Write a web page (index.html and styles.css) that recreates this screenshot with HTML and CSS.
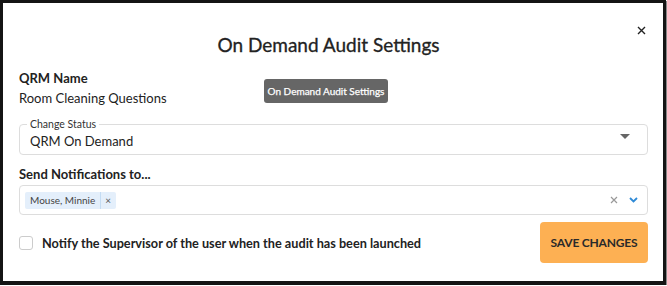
FILE: index.html
```html
<!DOCTYPE html>
<html lang="en">
<head>
  <meta charset="UTF-8" />
  <title>On Demand Audit Settings</title>
  <link rel="stylesheet" href="styles.css">
</head>
<body>
  <div class="modal">
    <button class="close" aria-label="Close">
      <svg width="9" height="9" viewBox="0 0 9 9"><path d="M1 1L8 8M8 1L1 8" stroke="#222" stroke-width="1.4"/></svg>
    </button>
    <h1 class="title">On Demand Audit Settings</h1>

    <div class="label">QRM Name</div>
    <div class="value">Room Cleaning Questions</div>
    <div class="tooltip">On Demand Audit Settings</div>

    <div class="field status">
      <span class="field-label">Change Status</span>
      <span class="field-value">QRM On Demand</span>
      <svg class="caret" width="10" height="5" viewBox="0 0 10 5"><path d="M0 0H10L5 5Z" fill="#666"/></svg>
    </div>

    <div class="label notify-label">Send Notifications to...</div>
    <div class="field multi">
      <span class="chip"><span class="chip-text">Mouse, Minnie</span><span class="chip-x">×</span></span>
      <span class="multi-icons">
        <svg width="8" height="8" viewBox="0 0 8 8"><path d="M1 1L7 7M7 1L1 7" stroke="#999" stroke-width="1.2"/></svg>
        <svg width="9" height="6" viewBox="0 0 9 6"><path d="M1 1L4.5 4.5L8 1" stroke="#2f8ad6" stroke-width="1.8" fill="none"/></svg>
      </span>
    </div>

    <div class="footer">
      <label class="check">
        <span class="box"></span>
        Notify the Supervisor of the user when the audit has been launched
      </label>
      <button class="save">SAVE CHANGES</button>
    </div>
  </div>
</body>
</html>
```

FILE: styles.css
```css
* , *::before, *::after {
  box-sizing: border-box;
}
body {
  margin: 0;
  font-family: 'Lato', 'Noto Sans', sans-serif;
  color: #222;
  background: #fff;
}

.modal {
  position: relative;
  width: 666px;
  height: 285px;
  border: 3px solid #141414;
  border-bottom-width: 4px;
  box-shadow: 1px 1px 0 #888;
  padding: 0 15px 0 16px;
}

.close {
  position: absolute;
  top: 20px;
  right: 17px;
  border: none;
  background: none;
  padding: 0;
  cursor: pointer;
}

.title {
  margin: 0;
  padding: 30px 10px 0 0;
  font-size: 19px;
  line-height: 24px;
  font-weight: 400;
  -webkit-text-stroke: 0.3px #222;
  text-align: center;
}

.label {
  margin-top: 11px;
  font-size: 13px;
  line-height: 20px;
  font-weight: 700;
}
.value {
  font-size: 13px;
  line-height: 20px;
}

.tooltip {
  position: absolute;
  left: 261px;
  top: 76px;
  width: 124px;
  height: 24px;
  background: #666;
  color: #fff;
  border-radius: 3px;
  font-size: 10px;
  font-weight: 400;
  -webkit-text-stroke: 0.25px #fff;
  line-height: 24px;
  text-align: center;
  white-space: nowrap;
}

.field {
  position: relative;
  border: 1px solid #ddd;
  border-radius: 4px;
  display: flex;
  align-items: center;
}
.status {
  margin-top: 16px;
  height: 31px;
  padding-left: 10px;
}
.field-label {
  position: absolute;
  top: -8px;
  left: 7px;
  padding: 0 3px;
  background: #fff;
  font-size: 10.5px;
  line-height: 14px;
  color: #333;
}
.field-value {
  font-size: 13px;
  padding-top: 2px;
}
.caret {
  margin-left: auto;
  margin-right: 17px;
  margin-bottom: 7px;
}

.notify-label {
  margin-top: 9px;
}
.multi {
  margin-top: 1px;
  height: 30px;
  padding-left: 5px;
}
.chip {
  display: flex;
  align-items: center;
  height: 17px;
  background: #e4effb;
  border-radius: 2px;
  font-size: 10px;
  color: #444;
}
.chip-text {
  padding: 0 5px 0 5px;
  border-right: 1px solid #c4dcf3;
  line-height: 17px;
}
.chip-x {
  padding: 0 5px 0 4px;
  font-size: 10px;
  color: #555;
}
.multi-icons {
  margin-left: auto;
  margin-right: 9px;
  display: flex;
  align-items: center;
  gap: 11px;
}

.footer {
  margin-top: 7px;
  display: flex;
  align-items: center;
  justify-content: space-between;
}
.check {
  display: flex;
  align-items: center;
  gap: 9px;
  font-size: 12.7px;
  font-weight: 700;
  color: #222;
}
.box {
  width: 14px;
  height: 14px;
  border: 1px solid #ccc;
  border-radius: 3px;
}
.save {
  width: 108px;
  height: 41px;
  border: none;
  border-radius: 4px;
  background: #fdb053;
  font-family: inherit;
  font-size: 12px;
  font-weight: 700;
  letter-spacing: -0.2px;
  color: #2a2a2a;
  white-space: nowrap;
  cursor: pointer;
}
```
